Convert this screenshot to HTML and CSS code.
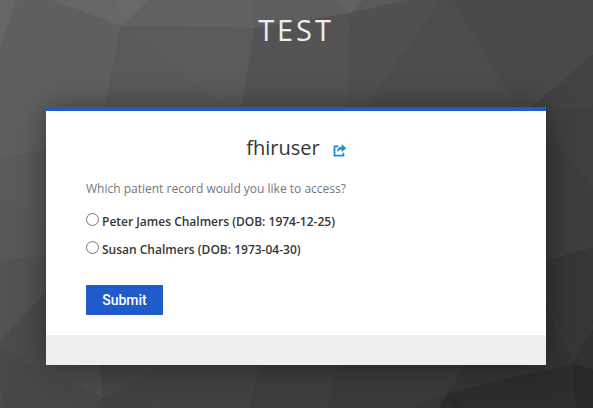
FILE: index.html
```html
<!DOCTYPE html>
<html lang="en">
<head>
<meta charset="utf-8">
<title>TEST</title>
<link rel="stylesheet" href="styles.css">
</head>
<body>
<svg class="backdrop" viewBox="0 0 593 408" aria-hidden="true">
  <defs>
    <linearGradient id="lower" x1="0" y1="0" x2="1" y2="0"><stop offset="0" stop-color="#484848"/><stop offset=".5" stop-color="#404040"/><stop offset="1" stop-color="#2c2c2c"/></linearGradient>
  </defs>
  <path fill="#5f5f5f" d="M0 0H593V408H0z"/>
  <path fill="url(#lower)" d="M0 348L60 340H593V408H0z"/>
  <path fill="#666" d="M0 0H17L0 47zM52 0H150L121 26z"/>
  <path fill="#696969" d="M116 0H150L121 26z"/>
  <path fill="#616161" d="M150 0H252L254 28L121 26z"/>
  <path fill="#595959" d="M121 26L254 28L241 110H104z"/>
  <path fill="#5b5b5b" d="M121 26L254 28L241 110L210 95z"/>
  <path fill="#5e5e5e" d="M252 0H336L350 13L254 28z"/>
  <path fill="#636363" d="M336 0H363L350 13z"/>
  <path fill="#5a5a5a" d="M363 0H406L350 13z"/>
  <path fill="#535353" d="M254 28L350 13L347 110H241z"/>
  <path fill="#505050" d="M350 13L406 0H441L363 110H347z"/>
  <path fill="#4c4c4c" d="M441 0H453L517 110H363z"/>
  <path fill="#494949" d="M453 0H593V54L529 108L517 110z"/>
  <path fill="#424242" d="M593 54V105L529 112V108z"/>
  <path fill="#404040" d="M529 112L593 105V187L546 141z"/>
  <path fill="#3d3d3d" d="M529 112L593 187V247L529 264z"/>
  <path fill="#363636" d="M529 264L593 247V327L573 364L529 260z"/>
  <path fill="#343434" d="M529 260L573 364L529 374z"/>
  <path fill="#5a5a5a" d="M0 158L60 147V230L0 197z"/>
  <path fill="#585858" d="M0 197L60 230V254L0 260z"/>
  <path fill="#535353" d="M0 260L60 254V277L0 340z"/>
  <path fill="#4b4b4b" d="M0 340L60 277V378L0 348z"/>
  <path fill="#4b4b4b" d="M40 350H98L103 398L40 367z"/>
  <path fill="#454545" d="M98 350H185L103 398z"/>
  <path fill="#424242" d="M165 365L103 398L155 408H250L260 365z"/>
  <path fill="#404040" d="M103 398L155 408H96z"/>
  <path fill="#3e3e3e" d="M260 365H338L327 408H250z"/>
  <path fill="#3b3b3b" d="M338 365H466L448 393L410 408H327z"/>
  <path fill="#353535" d="M466 365H530L573 364L448 393z"/>
  <path fill="#363636" d="M448 393L410 408H438z"/>
  <path fill="#2d2d2d" d="M448 393L573 364L576 408H438z"/>
  <path fill="#292929" d="M573 364L593 369V408H576zM448 393L462 408H455z"/>
  <path fill="#313131" d="M593 327V369L573 364z"/>
  <path fill="#4c4c4c" d="M0 348V380L4 408H0z"/>
</svg>
<main class="page">
  <h1 class="brand">TEST</h1>
  <section class="card">
    <div class="content">
      <header class="account">
        <span class="username">fhiruser</span>
        <svg class="restart" viewBox="0 0 14 13" aria-hidden="true">
          <path fill="none" stroke="#188fd3" stroke-width="1.8" d="M5.4 2.4H1.5V11.6H10.4V8.8"/>
          <path fill="#188fd3" d="M8.7.3L13.3 4.2L8.7 8V5.6C6.6 5.6 5.5 6.5 4.5 8.6C3.7 5.1 5.6 2.8 8.7 2.7z"/>
        </svg>
      </header>
      <form class="picker">
        <p class="question">Which patient record would you like to access?</p>
        <label class="option"><input class="radio" type="radio" name="patient"><span>Peter James Chalmers (DOB: 1974-12-25)</span></label>
        <label class="option"><input class="radio" type="radio" name="patient"><span>Susan Chalmers (DOB: 1973-04-30)</span></label>
        <button class="submit" type="button">Submit</button>
      </form>
    </div>
    <footer class="card-footer"></footer>
  </section>
</main>
</body>
</html>
```
FILE: styles.css
```css
* { box-sizing: border-box; }
body {
  margin: 0;
  height: 408px;
  overflow: hidden;
  background: #484848;
  font-family: "Open Sans", "Noto Sans", sans-serif;
  font-size: 12px;
}
.backdrop { position: absolute; top: 0; left: 0; width: 593px; height: 408px; }
.page { position: relative; height: 408px; padding-top: 10px; }
.brand {
  margin: 0;
  height: 97px;
  padding-right: 1px;
  font-size: 29px;
  font-weight: 400;
  line-height: 39px;
  letter-spacing: 2.9px;
  text-align: center;
  color: #eee;
}
.card {
  width: 500px;
  height: 258px;
  margin-left: 46px;
  display: flex;
  flex-direction: column;
  background: #fff;
  border-top: 4px solid #205bcb;
  box-shadow: 0 2px 30px rgba(0, 0, 0, .4);
}
.content { flex: 1; padding: 20px 40px 0; }
.account { display: flex; justify-content: center; align-items: center; height: 34px; padding-left: 1px; }
.username { font-size: 20px; line-height: 34px; color: #363636; }
.restart { width: 14px; height: 13px; margin: 4px 0 0 13px; }
.picker { display: flex; flex-direction: column; align-items: flex-start; }
.question { margin: 15px 0; line-height: 18px; color: #72767b; }
.option { display: flex; height: 28px; color: #363636; font-weight: 600; line-height: 18px; }
.radio {
  appearance: none;
  width: 13px;
  height: 13px;
  margin: 0 3px 0 0;
  border: 1px solid #767676;
  border-radius: 50%;
  background: #fff;
}
.submit {
  width: 77px;
  height: 30px;
  margin-top: 16px;
  padding: 0;
  border: 0;
  border-radius: 1px;
  background: #205bcb;
  color: #fff;
  font: 500 14px/30px Roboto, "Open Sans", sans-serif;
}
.card-footer { height: 30px; background: #efefef; }
```
